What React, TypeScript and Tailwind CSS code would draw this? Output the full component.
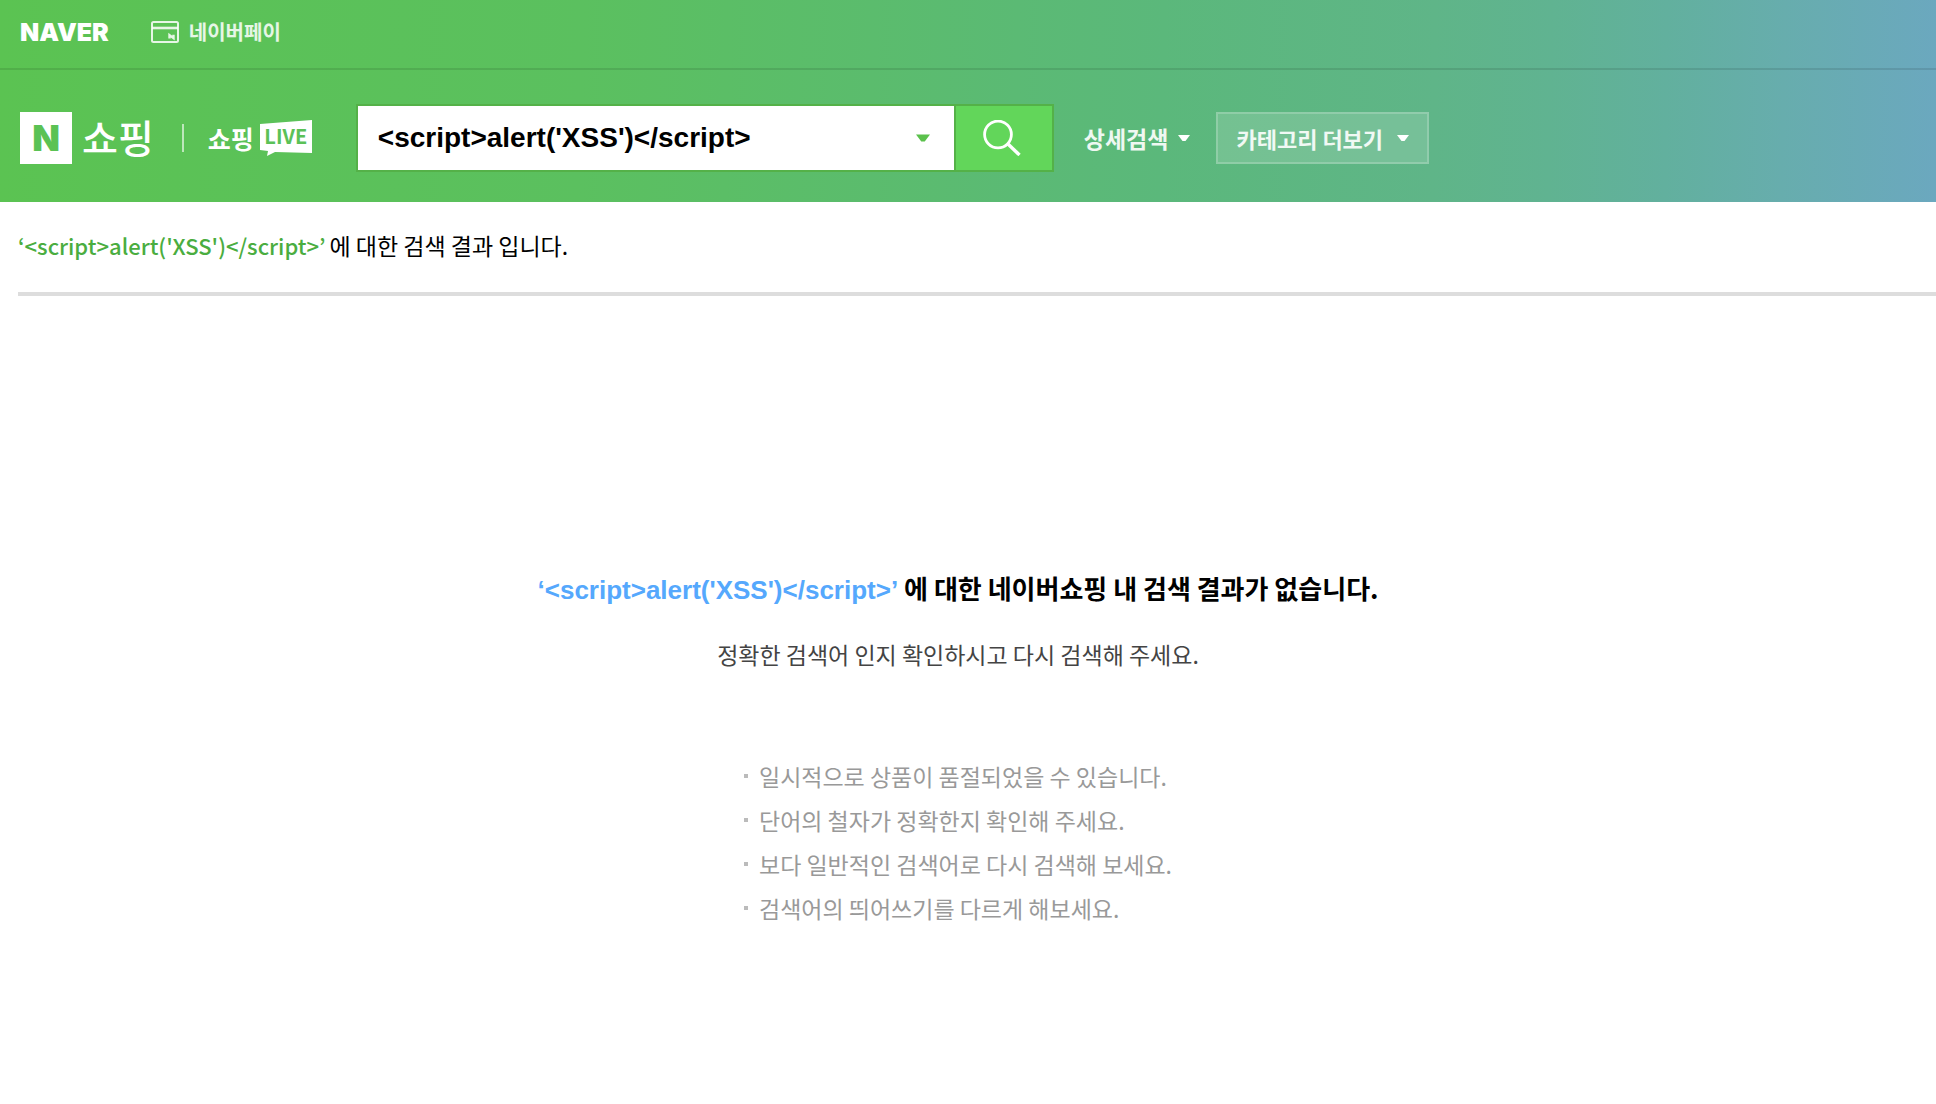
import React, { useState } from "react";

const QUERY = "<script>alert('XSS')</script>";

const TIPS = [
  "일시적으로 상품이 품절되었을 수 있습니다.",
  "단어의 철자가 정확한지 확인해 주세요.",
  "보다 일반적인 검색어로 다시 검색해 보세요.",
  "검색어의 띄어쓰기를 다르게 해보세요.",
];

function Caret({ className }: { className: string }) {
  return (
    <svg viewBox="0 0 12 6" className={className} fill="currentColor" aria-hidden="true">
      <path d="M0 0h12L7.5 6h-3z" />
    </svg>
  );
}

function PayIcon() {
  return (
    <svg viewBox="0 0 28 22" className="h-[22px] w-7" fill="none" stroke="currentColor" aria-hidden="true">
      <rect x="1" y="1" width="26" height="20" rx="1.5" strokeWidth="2" />
      <path d="M1 7h26" strokeWidth="2.6" />
      <path d="M18.5 17.5v-3.4l4 3v-3.4" strokeWidth="2.4" />
    </svg>
  );
}

function SearchIcon() {
  return (
    <svg viewBox="0 0 38 36" className="h-9 w-[38px]" fill="none" stroke="currentColor" strokeWidth="2.8" aria-hidden="true">
      <circle cx="15" cy="14.5" r="13.4" />
      <path d="M24.5 23.5l12 11.5" strokeWidth="3.4" />
    </svg>
  );
}

function LiveBadge() {
  return (
    <span className="relative ml-1.5 flex h-9 w-[52px] justify-center">
      <svg viewBox="0 0 52 36" className="absolute inset-0 h-full w-full" fill="#fff" aria-hidden="true">
        <path d="M0 4L52 0v33l-37-1-8 4 1-5-8-1z" />
      </svg>
      <span className="relative pt-1.5 text-xl leading-5 font-bold text-[#5bc157]">LIVE</span>
    </span>
  );
}

function TopBar() {
  return (
    <nav className="flex h-[70px] items-center border-b-2 border-black/10 px-5 pb-1 text-white">
      <a href="#naver" className="font-[Inter] text-[25px] leading-6 font-black">NAVER</a>
      <a href="#pay" className="ml-[42px] flex items-center gap-2.5 text-xl leading-6 font-bold text-white/85">
        <PayIcon />
        네이버페이
      </a>
    </nav>
  );
}

function SearchForm() {
  const [value, setValue] = useState(QUERY);
  return (
    <form className="flex h-[68px]" onSubmit={(e) => e.preventDefault()}>
      <div className="flex w-[598px] items-center border-2 border-r-0 border-[#54b148] bg-white pr-6 pl-5">
        <input
          aria-label="검색어"
          value={value}
          onChange={(e) => setValue(e.target.value)}
          className="min-w-0 flex-1 bg-transparent font-['Liberation_Sans','Noto_Sans_CJK_KR',sans-serif] text-[28px] leading-9 font-bold text-black outline-none"
        />
        <button type="button" aria-label="자동완성 펼치기" className="text-[#5bc14c]">
          <Caret className="h-2 w-3.5" />
        </button>
      </div>
      <button
        type="submit"
        aria-label="검색"
        className="flex w-[100px] items-center justify-center border-2 border-[#54b148] bg-[#62d65a] pr-1 text-white"
      >
        <SearchIcon />
      </button>
    </form>
  );
}

function Header() {
  return (
    <header className="bg-[linear-gradient(91deg,#5bc352_0%,#5bc05f_30%,#5bb87b_60%,#5fb588_74%,#60b391_80%,#62b09e_86%,#67adad_92%,#6ba8bf_100%)]">
      <TopBar />
      <div className="flex h-[132px] items-center px-5 pt-1 text-white">
        <a href="#home" aria-label="N 쇼핑" className="flex items-center gap-2.5">
          <span className="flex size-[52px] items-center justify-center bg-white font-[Inter] text-4xl font-black text-[#5bc254]">N</span>
          <span className="pb-1 text-[39px] leading-[48px] font-medium">쇼핑</span>
        </a>
        <span className="ml-7 h-7 w-0.5 bg-white/60" />
        <a href="#live" aria-label="쇼핑 LIVE" className="ml-6 flex items-center text-[25px] leading-9 font-bold">
          쇼핑
          <LiveBadge />
        </a>
        <div className="ml-11">
          <SearchForm />
        </div>
        <button type="button" className="ml-[30px] flex items-center gap-2.5 text-[23px] leading-8 font-bold text-white/90">
          상세검색
          <Caret className="h-1.5 w-3 text-white" />
        </button>
        <button
          type="button"
          className="ml-[26px] flex h-[52px] items-center gap-3.5 border-2 border-white/20 bg-white/15 px-[18px] text-[22px] leading-8 font-bold text-white/90"
        >
          카테고리 더보기
          <Caret className="h-1.5 w-3 text-white" />
        </button>
      </div>
    </header>
  );
}

export default function App() {
  return (
    <div className="min-h-screen bg-white font-['Noto_Sans_CJK_KR',sans-serif] text-black">
      <Header />
      <main>
        <p className="ml-[18px] flex h-[94px] items-center gap-1 border-b-4 border-[#ddd] pb-1 text-[23px] leading-8">
          <strong className="text-[22px] font-medium text-[#4aad40]">‘{QUERY}’</strong>
          <span>에 대한 검색 결과 입니다.</span>
        </p>
        <section className="flex flex-col items-center pt-[274px] pr-5">
          <h1 className="text-[26px] leading-9 font-bold">
            <em className="font-['Liberation_Sans',sans-serif] text-[#55a8fd] not-italic">‘{QUERY}’</em> 에 대한 네이버쇼핑 내 검색 결과가 없습니다.
          </h1>
          <p className="mt-[30px] text-[23px] leading-8 text-[#444]">정확한 검색어 인지 확인하시고 다시 검색해 주세요.</p>
          <ul className="mt-[84px] text-[23px] leading-[44px] text-[#999]">
            {TIPS.map((tip) => (
              <li key={tip} className="flex items-center gap-[11px]">
                <span className="size-1 bg-[#bbb]" />
                {tip}
              </li>
            ))}
          </ul>
        </section>
      </main>
    </div>
  );
}
